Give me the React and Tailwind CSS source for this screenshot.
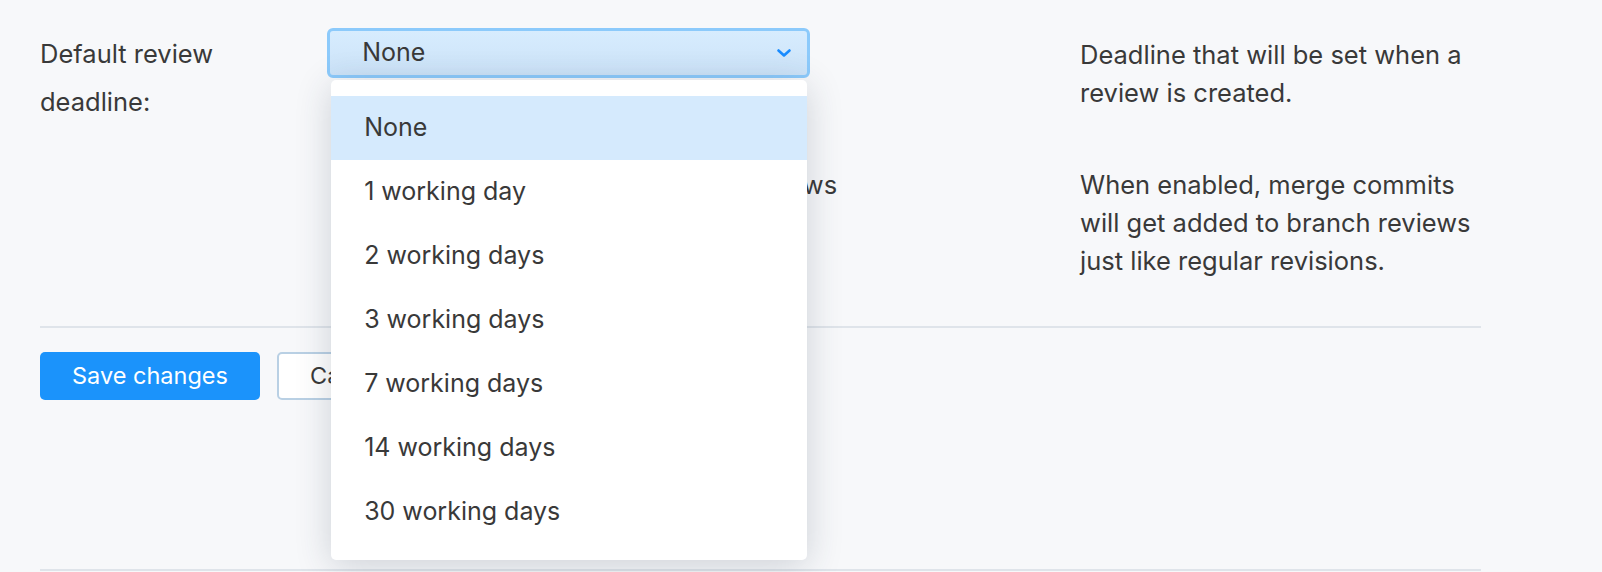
import React from 'react'

const options = ['None', '1 working day', '2 working days', '3 working days', '7 working days', '14 working days', '30 working days']

function Chevron() {
  return (
    <svg width="14" height="8" viewBox="0 0 14 8" fill="none">
      <polyline points="1.5,1.5 7,6.5 12.5,1.5" stroke="#1a8cff" strokeWidth="2.6" strokeLinecap="round" strokeLinejoin="round" />
    </svg>
  )
}

export default function App() {
  return (
    <div className="h-[572px] overflow-hidden bg-[#f7f8fa] text-[#393939] font-['Inter',sans-serif] text-[25.5px]">
      <div className="w-[1441px] ml-[40px] pt-[28px]">
        {/* deadline row */}
        <div className="flex items-start">
          <div className="w-[290px] mt-[2px] leading-[48px]">
            Default review<br />deadline:
          </div>
          <div className="w-[716px] relative z-10">
            <div className="relative w-[483px] text-[25px]">
              <div className="h-[50px] flex items-center justify-between pl-[32px] pr-[16px] rounded-[6px] border-[3px] border-[#8ccafb] bg-gradient-to-b from-[#d7ecfe] to-[#cce3f8]">
                <span>None</span>
                <Chevron />
              </div>
              <div className="absolute left-[4px] top-[52px] w-[476px] py-[16px] bg-white rounded-[5px] shadow-[0_6px_36px_rgba(40,55,75,0.2)]">
                {options.map((o, i) => (
                  <div key={o} className={i === 0 ? 'h-[64px] flex items-center pl-[33px] bg-[#d5eafd]' : 'h-[64px] flex items-center pl-[33px]'}>
                    {o}
                  </div>
                ))}
              </div>
            </div>
          </div>
          <div className="ml-[44px] mt-[8px] w-[405px] leading-[38px]">
            Deadline that will be set when a review is created.
          </div>
        </div>

        {/* merge commits row */}
        <div className="flex items-start mt-[40px]">
          <div className="w-[290px]" />
          <div className="w-[716px] leading-[38px]">
            <div className="w-[510px] flex items-center justify-end gap-[14px]">
              <span className="w-[20px] h-[20px] rounded-[4px] border-2 border-[#b7cde0] bg-white" />
              <span>Add merge commits to branch reviews</span>
            </div>
          </div>
          <div className="ml-[44px] w-[405px] leading-[38px]">
            When enabled, merge commits will get added to branch reviews just like regular revisions.
          </div>
        </div>

        <div className="mt-[46px] h-[2px] bg-[#dfe4ea]" />

        <div className="flex gap-[17px] mt-[24px] text-[23.5px]">
          <button className="h-[48px] w-[220px] rounded-[5px] bg-[#1b93fb] text-white">Save changes</button>
          <button className="h-[48px] px-[31px] rounded-[5px] border-2 border-[#b9d0e4] bg-white text-[#393939]">Cancel</button>
        </div>

        <div className="mt-[169px] h-[2px] bg-[#dfe4ea]" />
      </div>
    </div>
  )
}
